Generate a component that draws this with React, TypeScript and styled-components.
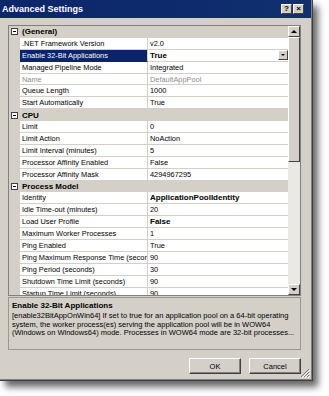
import React from "react";
import styled, { createGlobalStyle } from "styled-components";

const GlobalStyle = createGlobalStyle`
  html, body { margin: 0; padding: 0; background: #ffffff; overflow: hidden; }
  body { font-family: "Liberation Sans", Arial, sans-serif; }
`;

const Page = styled.div`
  width: 329px;
  height: 396px;
  background: #ffffff;
`;

const Dialog = styled.div`
  position: relative;
  width: 313px;
  height: 381px;
  box-sizing: border-box;
  background: #d4d0c8;
  border-right: 1px solid #404040;
  border-bottom: 1px solid #404040;
  box-shadow: inset -1px -1px 0 #808080, 5px 6px 7px rgba(0, 0, 0, 0.6);
  display: flex;
  flex-direction: column;
`;

const TitleBar = styled.div`
  height: 18px;
  background: linear-gradient(90deg, #0b266a, #10306f);
  color: #ffffff;
  font: bold 9px "Liberation Sans", Arial, sans-serif;
  display: flex;
  align-items: center;
  justify-content: space-between;
  padding: 0 7px 0 2px;
  margin-right: 1px;
`;

const TitleButtons = styled.div`
  display: flex;
  gap: 1px;
`;

const TitleButton = styled.div`
  width: 11px;
  height: 10px;
  box-sizing: border-box;
  background: #d4d0c8;
  border: 1px solid;
  border-color: #ffffff #404040 #404040 #ffffff;
  color: #000000;
  font: bold 8px "Liberation Sans", Arial, sans-serif;
  line-height: 8px;
  text-align: center;
`;

const Body = styled.div`
  padding: 7px 11px 0 8px;
  display: flex;
  flex-direction: column;
`;

const Grid = styled.div`
  height: 271px;
  box-sizing: border-box;
  border: 1px solid #808080;
  background: #ffffff;
  display: flex;
  overflow: hidden;
`;

const Rows = styled.div`
  flex: 1;
  display: flex;
  flex-direction: column;
  overflow: hidden;
`;

const Row = styled.div`
  flex: 0 0 11.9px;
  height: 11.9px;
  box-sizing: border-box;
  display: grid;
  grid-template-columns: 11px 128px 1fr;
  font: 7.4px "Liberation Sans", Arial, sans-serif;
  color: #000000;
`;

const Margin = styled.div`
  background: #d4d0c8;
  display: flex;
  align-items: center;
  justify-content: center;
`;

const Expander = styled.div`
  width: 7px;
  height: 7px;
  box-sizing: border-box;
  border: 1px solid #404040;
  background: #ffffff;
  display: flex;
  align-items: center;
  justify-content: center;
  &::after {
    content: "";
    width: 3px;
    height: 1px;
    background: #000000;
  }
`;

const CategoryCell = styled.div`
  grid-column: 2 / 4;
  background: #d4d0c8;
  font: bold 8px "Liberation Sans", Arial, sans-serif;
  display: flex;
  align-items: center;
  padding-left: 2px;
`;

const NameCell = styled.div<{ $selected?: boolean; $disabled?: boolean }>`
  box-sizing: border-box;
  border-right: 1px solid #d4d0c8;
  border-bottom: 1px solid ${(p) => (p.$selected ? "#0a246a" : "#d4d0c8")};
  background: ${(p) => (p.$selected ? "#0a246a" : "#ffffff")};
  color: ${(p) => (p.$selected ? "#ffffff" : p.$disabled ? "#8c8c8c" : "#000000")};
  white-space: nowrap;
  overflow: hidden;
  display: flex;
  align-items: center;
  padding-left: 2px;
`;

const ValueCell = styled.div<{ $bold?: boolean; $disabled?: boolean }>`
  box-sizing: border-box;
  border-bottom: 1px solid #d4d0c8;
  color: ${(p) => (p.$disabled ? "#8c8c8c" : "#000000")};
  font-weight: ${(p) => (p.$bold ? "bold" : "normal")};
  font-size: ${(p) => (p.$bold ? "8px" : "7.4px")};
  white-space: nowrap;
  overflow: hidden;
  display: flex;
  align-items: center;
  justify-content: space-between;
  padding-left: 2px;
`;

const DropButton = styled.div`
  width: 10px;
  height: 10px;
  box-sizing: border-box;
  background: #d4d0c8;
  border: 1px solid;
  border-color: #ffffff #404040 #404040 #ffffff;
  display: flex;
  align-items: center;
  justify-content: center;
  &::after {
    content: "";
    border-left: 2px solid transparent;
    border-right: 2px solid transparent;
    border-top: 2px solid #000000;
  }
`;

const Scrollbar = styled.div`
  width: 12px;
  display: flex;
  flex-direction: column;
  background: #ebe9e4;
`;

const ScrollButton = styled.div<{ $up?: boolean }>`
  height: 11px;
  box-sizing: border-box;
  background: #d4d0c8;
  border: 1px solid;
  border-color: #ffffff #404040 #404040 #ffffff;
  display: flex;
  align-items: center;
  justify-content: center;
  &::after {
    content: "";
    border-left: 3px solid transparent;
    border-right: 3px solid transparent;
    ${(p) =>
      p.$up ? "border-bottom: 3px solid #000000;" : "border-top: 3px solid #000000;"}
  }
`;

const Thumb = styled.div`
  height: 125px;
  box-sizing: border-box;
  background: #d4d0c8;
  border: 1px solid;
  border-color: #ffffff #404040 #404040 #ffffff;
`;

const Track = styled.div`
  flex: 1;
`;

const Description = styled.div`
  margin-top: 1px;
  height: 53px;
  box-sizing: border-box;
  border: 1px solid #9c9890;
  padding: 3px 3px 0 3px;
  overflow: hidden;
`;

const DescTitle = styled.div`
  font: bold 8px "Liberation Sans", Arial, sans-serif;
  line-height: 10px;
  margin-bottom: 1px;
`;

const DescText = styled.div`
  font: 7.5px "Liberation Sans", Arial, sans-serif;
  line-height: 8.6px;
  white-space: nowrap;
`;

const Footer = styled.div`
  display: flex;
  justify-content: flex-end;
  gap: 8px;
  margin-top: 8px;
`;

const Button = styled.div`
  width: 52px;
  height: 16px;
  box-sizing: border-box;
  background: #d4d0c8;
  border: 1px solid;
  border-color: #ffffff #404040 #404040 #ffffff;
  box-shadow: inset -1px -1px 0 #808080;
  font: 7.5px "Liberation Sans", Arial, sans-serif;
  display: flex;
  align-items: center;
  justify-content: center;
`;

const Grip = styled.svg`
  position: absolute;
  right: 2px;
  bottom: 2px;
`;

type Prop = {
  kind: "cat" | "prop";
  name: string;
  value?: string;
  bold?: boolean;
  disabled?: boolean;
  selected?: boolean;
};

const props: Prop[] = [
  { kind: "cat", name: "(General)" },
  { kind: "prop", name: ".NET Framework Version", value: "v2.0" },
  { kind: "prop", name: "Enable 32-Bit Applications", value: "True", bold: true, selected: true },
  { kind: "prop", name: "Managed Pipeline Mode", value: "Integrated" },
  { kind: "prop", name: "Name", value: "DefaultAppPool", disabled: true },
  { kind: "prop", name: "Queue Length", value: "1000" },
  { kind: "prop", name: "Start Automatically", value: "True" },
  { kind: "cat", name: "CPU" },
  { kind: "prop", name: "Limit", value: "0" },
  { kind: "prop", name: "Limit Action", value: "NoAction" },
  { kind: "prop", name: "Limit Interval (minutes)", value: "5" },
  { kind: "prop", name: "Processor Affinity Enabled", value: "False" },
  { kind: "prop", name: "Processor Affinity Mask", value: "4294967295" },
  { kind: "cat", name: "Process Model" },
  { kind: "prop", name: "Identity", value: "ApplicationPoolIdentity", bold: true },
  { kind: "prop", name: "Idle Time-out (minutes)", value: "20" },
  { kind: "prop", name: "Load User Profile", value: "False", bold: true },
  { kind: "prop", name: "Maximum Worker Processes", value: "1" },
  { kind: "prop", name: "Ping Enabled", value: "True" },
  { kind: "prop", name: "Ping Maximum Response Time (seconds)", value: "90" },
  { kind: "prop", name: "Ping Period (seconds)", value: "30" },
  { kind: "prop", name: "Shutdown Time Limit (seconds)", value: "90" },
  { kind: "prop", name: "Startup Time Limit (seconds)", value: "90" },
];

export default function App() {
  return (
    <Page>
      <GlobalStyle />
      <Dialog>
        <TitleBar>
          <span>Advanced Settings</span>
          <TitleButtons>
            <TitleButton>?</TitleButton>
            <TitleButton>×</TitleButton>
          </TitleButtons>
        </TitleBar>
        <Body>
          <Grid>
            <Rows>
              {props.map((p, i) =>
                p.kind === "cat" ? (
                  <Row key={i}>
                    <Margin>
                      <Expander />
                    </Margin>
                    <CategoryCell>{p.name}</CategoryCell>
                  </Row>
                ) : (
                  <Row key={i}>
                    <Margin />
                    <NameCell $selected={p.selected} $disabled={p.disabled}>
                      {p.name}
                    </NameCell>
                    <ValueCell $bold={p.bold} $disabled={p.disabled}>
                      <span>{p.value}</span>
                      {p.selected && <DropButton />}
                    </ValueCell>
                  </Row>
                )
              )}
            </Rows>
            <Scrollbar>
              <ScrollButton $up />
              <Thumb />
              <Track />
              <ScrollButton />
            </Scrollbar>
          </Grid>
          <Description>
            <DescTitle>Enable 32-Bit Applications</DescTitle>
            <DescText>
              [enable32BitAppOnWin64] If set to true for an application pool on a 64-bit operating
            </DescText>
            <DescText>
              system, the worker process(es) serving the application pool will be in WOW64
            </DescText>
            <DescText>
              (Windows on Windows64) mode. Processes in WOW64 mode are 32-bit processes...
            </DescText>
          </Description>
          <Footer>
            <Button>OK</Button>
            <Button>Cancel</Button>
          </Footer>
        </Body>
        <Grip width="10" height="10" viewBox="0 0 10 10">
          <path d="M9 1L1 9M9 4L4 9M9 7L7 9" stroke="#808080" strokeWidth="1" />
          <path d="M10 2L2 10M10 5L5 10M10 8L8 10" stroke="#ffffff" strokeWidth="1" />
        </Grip>
      </Dialog>
    </Page>
  );
}
